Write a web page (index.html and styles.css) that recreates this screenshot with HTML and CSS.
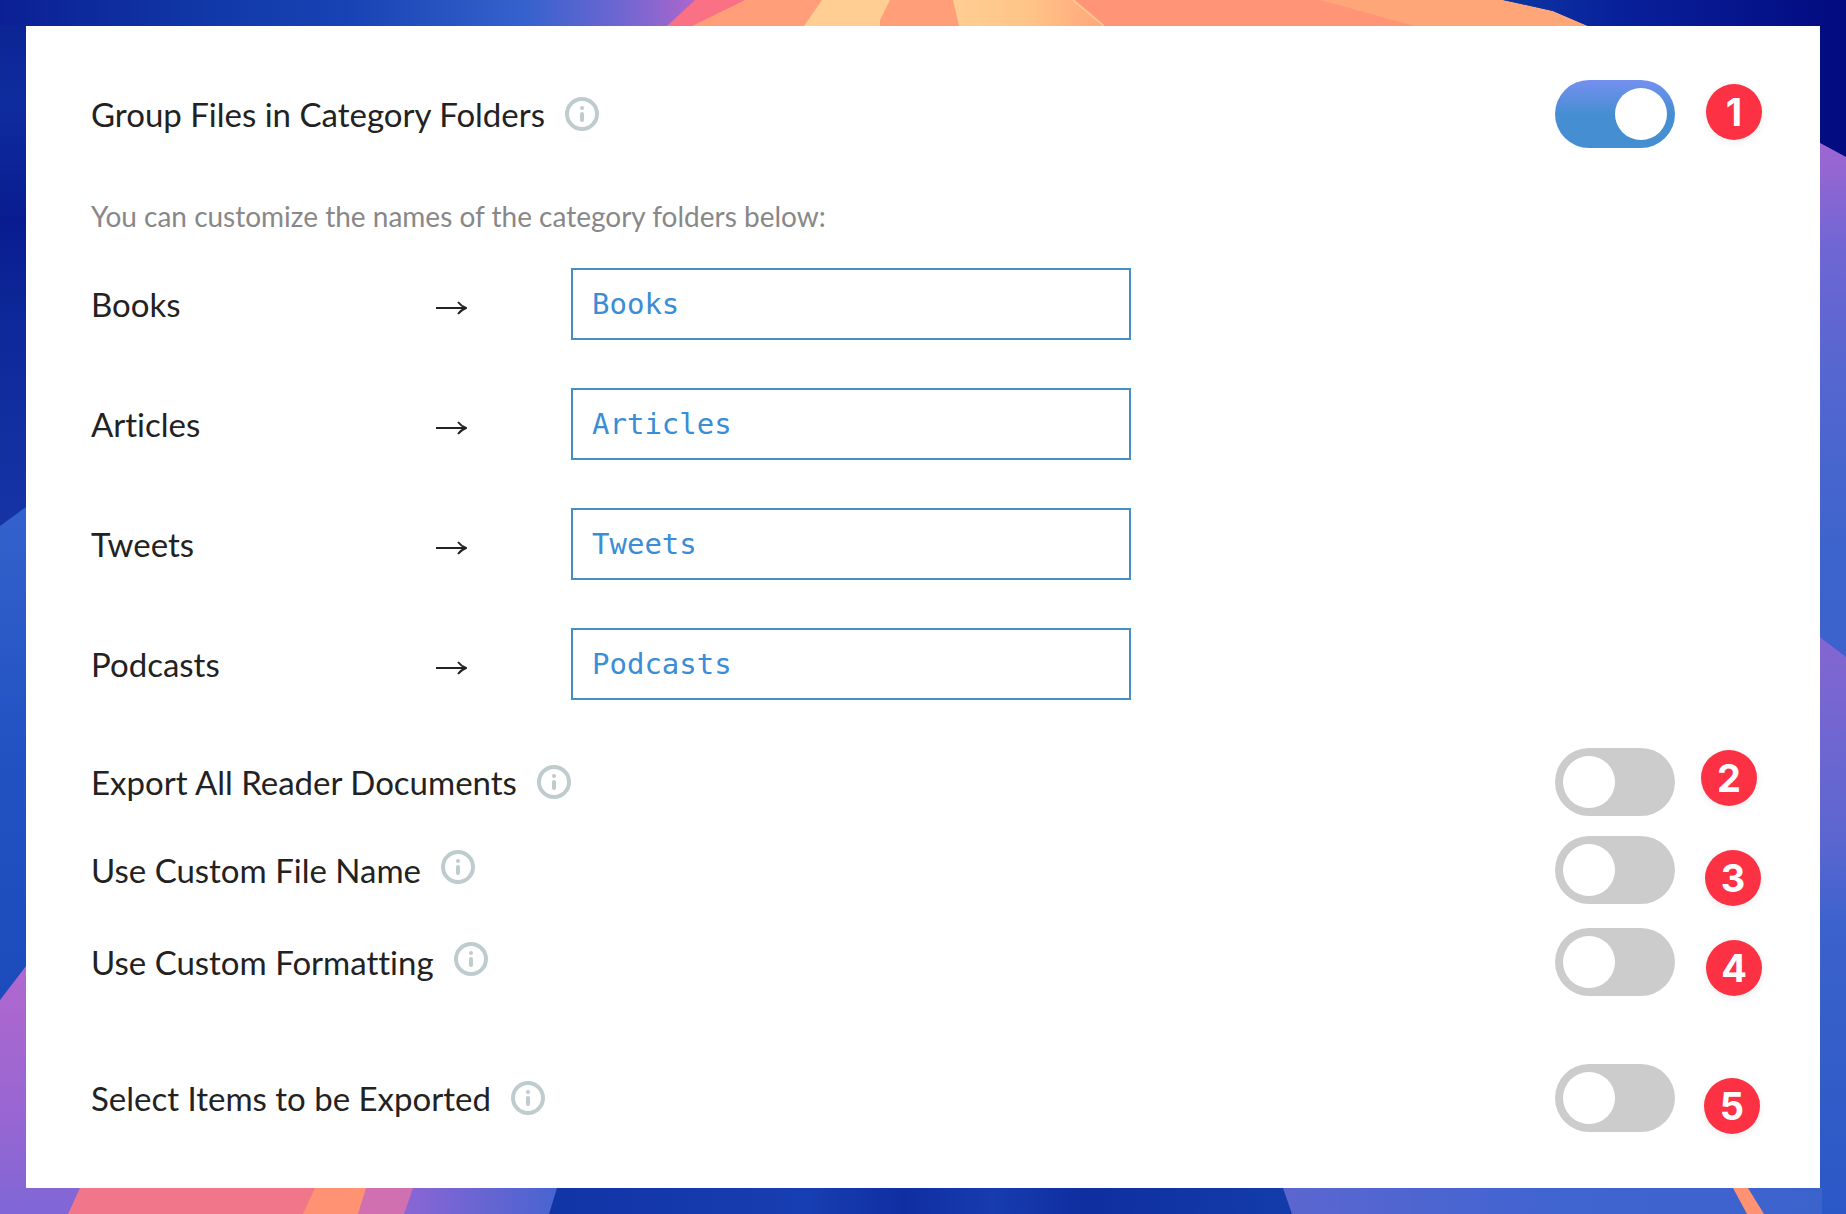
FILE: index.html
```
<!DOCTYPE html>
<html lang="en">
<head>
<meta charset="UTF-8">
<meta name="viewport" content="width=device-width, initial-scale=1">
<title>Export settings</title>
<link rel="stylesheet" href="styles.css">
</head>
<body>

<svg class="wallpaper" viewBox="0 0 1846 1214" preserveAspectRatio="none" aria-hidden="true">
  <defs>
    <linearGradient id="top" gradientUnits="userSpaceOnUse" x1="0" y1="0" x2="700" y2="0">
      <stop offset="0" stop-color="#0b2094"/><stop offset=".3" stop-color="#1138a8"/>
      <stop offset=".5" stop-color="#1843b4"/><stop offset=".75" stop-color="#3562cc"/>
      <stop offset=".88" stop-color="#6c66d2"/><stop offset="1" stop-color="#b066cc"/>
    </linearGradient>
    <linearGradient id="cream" x1="0" y1="0" x2="1" y2="0">
      <stop offset="0" stop-color="#ffce92"/><stop offset=".5" stop-color="#ffc488"/><stop offset="1" stop-color="#ffa679"/>
    </linearGradient>
    <linearGradient id="night" gradientUnits="userSpaceOnUse" x1="1500" y1="0" x2="1846" y2="0">
      <stop offset="0" stop-color="#0d36a2"/><stop offset=".35" stop-color="#08209a"/><stop offset="1" stop-color="#030b80"/>
    </linearGradient>
    <linearGradient id="l1" x1="0" y1="0" x2="0" y2="1">
      <stop offset="0" stop-color="#0b2292"/><stop offset=".2" stop-color="#0f2c9e"/>
      <stop offset=".42" stop-color="#081c90"/><stop offset=".6" stop-color="#0d2898"/><stop offset="1" stop-color="#1634a6"/>
    </linearGradient>
    <linearGradient id="l2" x1="0" y1="0" x2="0" y2="1">
      <stop offset="0" stop-color="#3362cc"/><stop offset=".5" stop-color="#2252c2"/><stop offset="1" stop-color="#1c4bbb"/>
    </linearGradient>
    <linearGradient id="l3" x1="0" y1="0" x2="0" y2="1">
      <stop offset="0" stop-color="#b068ce"/><stop offset=".6" stop-color="#9866d2"/><stop offset="1" stop-color="#8066d6"/>
    </linearGradient>
    <linearGradient id="r1" x1="0" y1="0" x2="0" y2="1">
      <stop offset="0" stop-color="#a066d2"/><stop offset=".2" stop-color="#7066d4"/>
      <stop offset=".45" stop-color="#5566d0"/><stop offset=".8" stop-color="#3c64cc"/><stop offset="1" stop-color="#3c62cc"/>
    </linearGradient>
    <linearGradient id="r2" x1="0" y1="0" x2="0" y2="1">
      <stop offset="0" stop-color="#8466d2"/><stop offset=".35" stop-color="#5c66d0"/>
      <stop offset=".5" stop-color="#3c62cc"/><stop offset="1" stop-color="#2a58c6"/>
    </linearGradient>
    <linearGradient id="b1" x1="0" y1="0" x2="1" y2="0">
      <stop offset="0" stop-color="#8a66d4"/><stop offset="1" stop-color="#4664d0"/>
    </linearGradient>
    <linearGradient id="b2" x1="0" y1="0" x2="1" y2="0">
      <stop offset="0" stop-color="#1134a6"/><stop offset=".35" stop-color="#173eb2"/>
      <stop offset=".48" stop-color="#0f2ea2"/><stop offset=".6" stop-color="#173cb0"/>
      <stop offset=".72" stop-color="#0f2ea0"/><stop offset="1" stop-color="#133caa"/>
    </linearGradient>
    <linearGradient id="b3" x1="0" y1="0" x2="1" y2="0">
      <stop offset="0" stop-color="#5c66d0"/><stop offset=".5" stop-color="#4064d0"/><stop offset="1" stop-color="#3c62cc"/>
    </linearGradient>
  </defs>

  <!-- left edge -->
  <path fill="url(#l1)" d="M0 0H60V496L0 526Z"/>
  <path fill="url(#l2)" d="M0 526L26 507V966L0 1000Z"/>
  <path fill="url(#l3)" d="M0 1000L26 966V1188H80V1214H0Z"/>

  <!-- top edge -->
  <path fill="url(#top)" d="M0 0H700V26H0Z"/>
  <path fill="#fa7084" d="M695 0H760V26H667Z"/>
  <path fill="#ff9e78" d="M745 0H1090V26H692Z"/>
  <path fill="#ffce92" d="M822 0H890L880 20V26H804Z"/>
  <path fill="url(#cream)" d="M953 0H1073L1105 26H959Z"/>
  <path fill="#ff9476" d="M1073 0H1330L1430 26H1105Z"/>
  <path fill="none" stroke="#ffc890" stroke-width="2" d="M1073 0L1104 26"/>
  <path fill="#ffa679" d="M1320 0H1503L1553 11L1588 26H1415Z"/>
  <path fill="url(#night)" d="M1503 0H1846V157L1820 143V26H1588L1553 11Z"/>

  <!-- right edge -->
  <path fill="url(#r1)" d="M1820 143L1846 157V658L1820 637Z"/>
  <path fill="url(#r2)" d="M1820 637L1846 657V1214H1820Z"/>

  <!-- bottom edge -->
  <path fill="#f2768a" d="M80 1188H320V1214H68Z"/>
  <path fill="#ff9272" d="M315 1188H370V1214H303Z"/>
  <path fill="#d070b0" d="M366 1188H420V1214H358Z"/>
  <path fill="url(#b1)" d="M413 1188H560V1214H404Z"/>
  <path fill="url(#b2)" d="M557 1188H1290V1214H549Z"/>
  <path fill="url(#b3)" d="M1283 1188H1822V1214H1292Z"/>
  <path fill="#ff9272" d="M1733 1188H1748L1764 1214H1747Z"/>
</svg>

<svg class="sprite" aria-hidden="true">
  <symbol id="info" viewBox="0 0 34 34">
    <circle cx="17" cy="17" r="15" fill="none" stroke="currentColor" stroke-width="4"/>
    <circle cx="17" cy="11" r="2" fill="currentColor"/>
    <path d="M17 17V23" fill="none" stroke="currentColor" stroke-width="4" stroke-linecap="round"/>
  </symbol>
  <symbol id="arrow" viewBox="0 0 32 16">
    <path d="M1 9H30" fill="none" stroke="currentColor" stroke-width="2"/>
    <path d="M23 3Q26 7 31 9Q26 11 23 15" fill="none" stroke="currentColor" stroke-width="2"/>
  </symbol>
</svg>

<main class="panel">
  <div class="setting">
    <label for="group">Group Files in Category Folders</label>
    <svg class="info"><use href="#info"/></svg>
    <input class="switch" type="checkbox" id="group" checked>
  </div>

  <p class="hint">You can customize the names of the category folders below:</p>

  <div class="folders">
    <div class="folder">
      <label for="books">Books</label>
      <svg class="arrow"><use href="#arrow"/></svg>
      <input type="text" id="books" value="Books">
    </div>
    <div class="folder">
      <label for="articles">Articles</label>
      <svg class="arrow"><use href="#arrow"/></svg>
      <input type="text" id="articles" value="Articles">
    </div>
    <div class="folder">
      <label for="tweets">Tweets</label>
      <svg class="arrow"><use href="#arrow"/></svg>
      <input type="text" id="tweets" value="Tweets">
    </div>
    <div class="folder">
      <label for="podcasts">Podcasts</label>
      <svg class="arrow"><use href="#arrow"/></svg>
      <input type="text" id="podcasts" value="Podcasts">
    </div>
  </div>

  <div class="setting">
    <label for="all-docs">Export All Reader Documents</label>
    <svg class="info"><use href="#info"/></svg>
    <input class="switch" type="checkbox" id="all-docs">
  </div>
  <div class="custom">
    <div class="setting">
      <label for="file-name">Use Custom File Name</label>
      <svg class="info"><use href="#info"/></svg>
      <input class="switch" type="checkbox" id="file-name">
    </div>
    <div class="setting">
      <label for="formatting">Use Custom Formatting</label>
      <svg class="info"><use href="#info"/></svg>
      <input class="switch" type="checkbox" id="formatting">
    </div>
  </div>
  <div class="setting">
    <label for="select-items">Select Items to be Exported</label>
    <svg class="info"><use href="#info"/></svg>
    <input class="switch" type="checkbox" id="select-items">
  </div>

  <!-- numbered pins laid over the panel -->
  <span class="pin pin-1">1</span>
  <span class="pin pin-2">2</span>
  <span class="pin pin-3">3</span>
  <span class="pin pin-4">4</span>
  <span class="pin pin-5">5</span>
</main>

</body>
</html>
```

FILE: styles.css
```
* {
  box-sizing: border-box;
}
body {
  margin: 0;
  padding: 26px;
  min-height: 100vh;
  display: flex;
  background: #1137a8;
  color: #222;
  font-family: Lato, "Open Sans", sans-serif;
  font-size: 33px;
  font-variant-ligatures: none;
  line-height: 40px;
}
.wallpaper {
  position: fixed;
  top: 0;
  left: 0;
  width: 100%;
  height: 100%;
  z-index: -1;
}
.sprite {
  display: none;
}
.panel {
  position: relative;
  flex: 1;
  padding: 54px 145px 56px 65px;
  background: #fff;
}
.setting {
  display: flex;
  align-items: center;
  gap: 20px;
}
.info {
  width: 34px;
  height: 34px;
  color: #bfcccd;
}
.switch {
  appearance: none;
  width: 120px;
  height: 68px;
  margin: 0 0 0 auto;
  padding: 8px;
  border-radius: 34px;
  background: #ccc;
  cursor: pointer;
}
.switch::before {
  content: "";
  display: block;
  width: 52px;
  height: 52px;
  border-radius: 50%;
  background: #fff;
}
.switch:checked {
  background: linear-gradient(#7590f0, #468ed2 50%);
}
.switch:checked::before {
  margin-left: auto;
}
.hint {
  margin: 52px 0 36px;
  color: #888;
  font-size: 28px;
  line-height: 32px;
}
.folders {
  display: grid;
  gap: 48px;
  margin-bottom: 48px;
}
.folder {
  display: grid;
  grid-template-columns: 344px 136px 560px;
  align-items: center;
}
.arrow {
  width: 32px;
  height: 16px;
  margin-top: 6px;
}
.folder input {
  width: 100%;
  height: 72px;
  padding: 0 19px;
  border: 2px solid #468ec8;
  border-radius: 0;
  background: #fff;
  color: #3a8dd6;
  font-family: "DejaVu Sans Mono", monospace;
  font-size: 29px;
}
.custom {
  display: grid;
  gap: 24px;
  margin: 20px 0 68px;
}
.custom .info {
  margin-bottom: 6px;
}
.pin {
  position: absolute;
  width: 56px;
  height: 56px;
  border-radius: 50%;
  background: #fc3144;
  box-shadow: 0 2px 8px rgba(0,0,0,0.08);
  color: #fff;
  font-family: Inter, sans-serif;
  font-size: 38px;
  font-weight: 700;
  line-height: 56px;
  text-align: center;
}
.pin-1 {
  top: 58px;
  right: 58px;
}
.pin-2 {
  top: 724px;
  right: 63px;
}
.pin-3 {
  top: 824px;
  right: 59px;
}
.pin-4 {
  top: 914px;
  right: 58px;
}
.pin-5 {
  top: 1052px;
  right: 60px;
}
```
